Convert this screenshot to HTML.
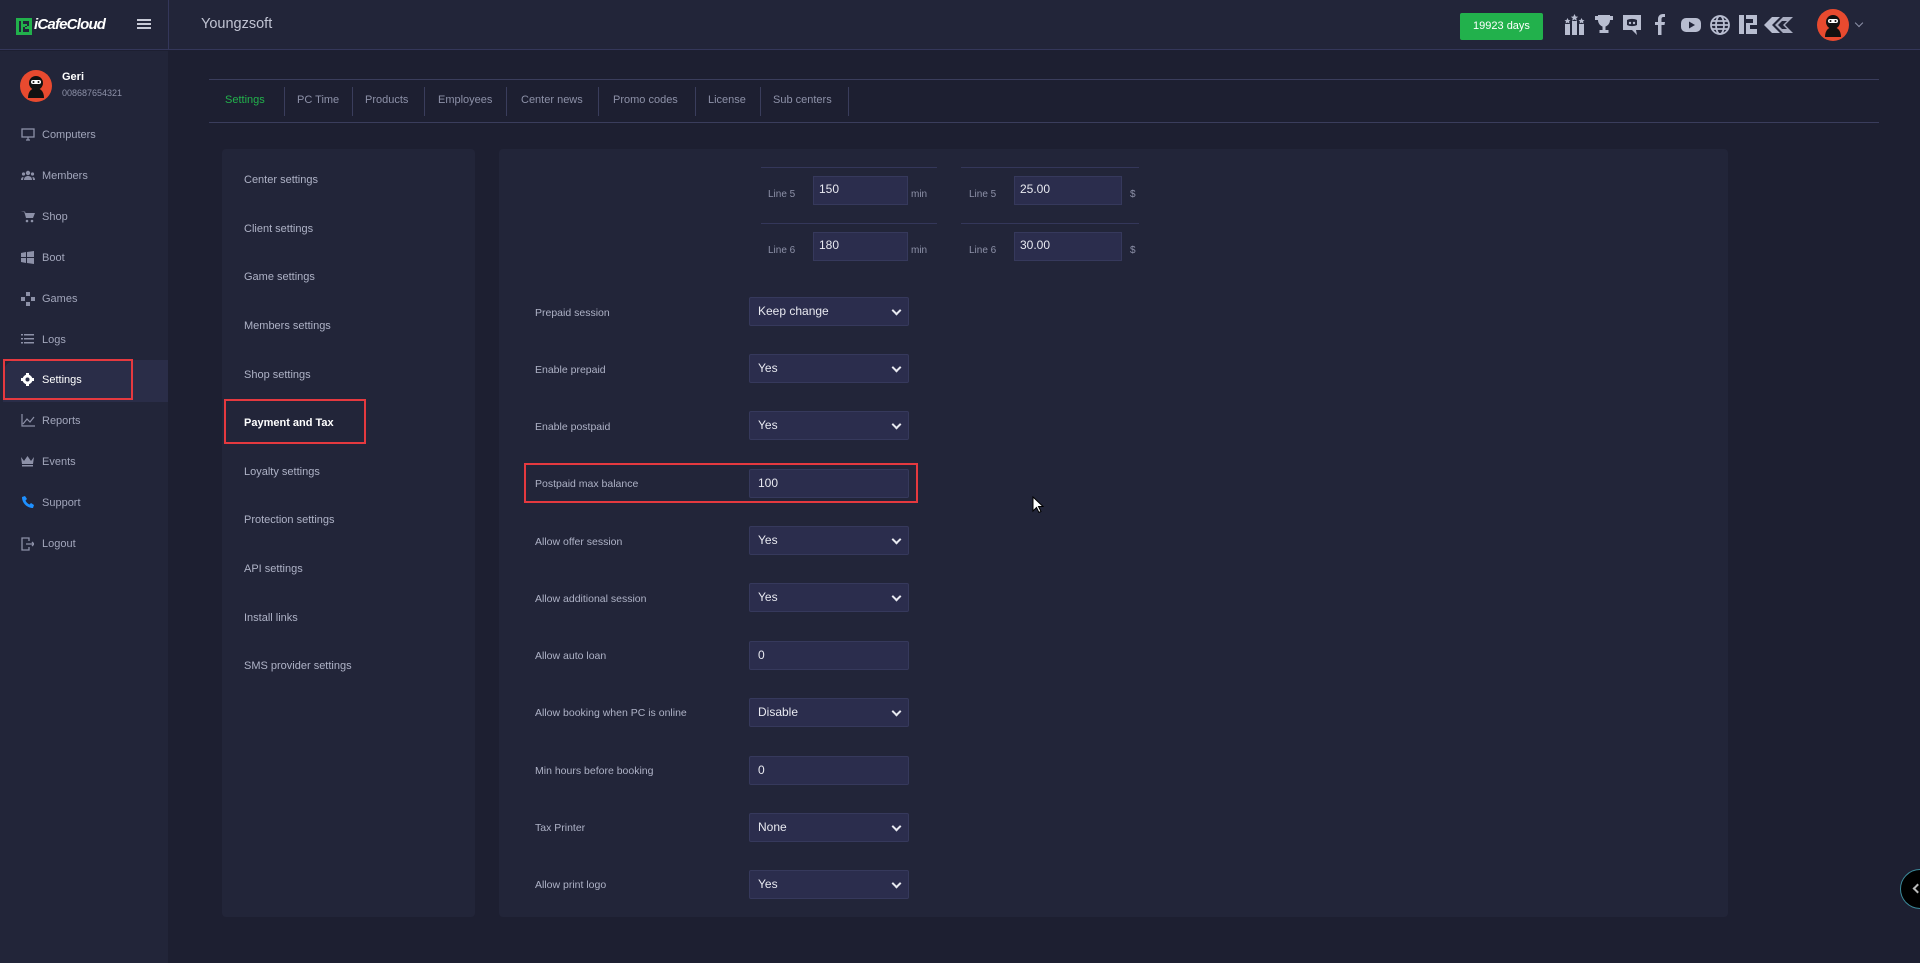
<!DOCTYPE html>
<html><head><meta charset="utf-8"><style>
*{margin:0;padding:0;box-sizing:border-box}
body{width:1920px;height:963px;background:#1d1f31;font-family:"Liberation Sans",sans-serif;color:#9fa3b8;position:relative;overflow:hidden;font-size:11px}
.a{position:absolute}
#hdr{left:0;top:0;width:1920px;height:50px;background:#222539;border-bottom:1px solid #34375a}
#side{left:0;top:51px;width:168px;height:912px;background:#222539}
.mi{position:absolute;left:21px;font-size:11px;color:#a2a6bb;height:14px;line-height:14px}
.mi span{position:absolute;left:21px;white-space:nowrap}
.mi svg{position:absolute;left:0;top:0}
.tab{position:absolute;top:94px;font-size:11px;color:#8d91a8}
.dv{position:absolute;top:87px;width:1px;height:29px;background:#3a3d5c}
.panel{background:#222539;border-radius:4px}
.li{position:absolute;left:244px;font-size:11px;color:#aeb2c6}
.lb{position:absolute;left:535px;font-size:10.5px;color:#aeb2c6}
.in{position:absolute;left:749px;width:160px;height:29px;background:#2b2d4d;border:1px solid #36395c;border-radius:2px;color:#e8e9f0;font-size:12px;line-height:27px;padding-left:8px}
.in.s:after{content:"";position:absolute;right:8px;top:9px;width:5px;height:5px;border-right:2px solid #e8e9f0;border-bottom:2px solid #e8e9f0;transform:rotate(45deg)}
.sm{position:absolute;height:29px;background:#2b2d4d;border:1px solid #36395c;color:#e8e9f0;font-size:12px;line-height:24px;padding-left:5px}
.red{position:absolute;border:2px solid #e5393f}
</style></head><body>
<div id="hdr" class="a"></div>
<div class="a" style="left:168px;top:0;width:1px;height:50px;background:#34375a"></div>
<svg class="a" style="left:16px;top:18px" width="16" height="17" viewBox="0 0 16 17"><rect x="0" y="0" width="16" height="17" fill="#22b14c"/><rect x="3" y="3" width="2" height="11" fill="#222539"/><path d="M7 3h6v5h-4v3h4v3h-6v-5h4v-3h-4z" fill="#222539"/></svg>
<div class="a" style="left:34px;top:16px;font-size:15px;font-style:italic;color:#fff;font-weight:bold;letter-spacing:-0.8px">iCafeCloud</div>
<div class="a" style="left:137px;top:19px;width:14px;height:2px;background:#c8cad6;box-shadow:0 4px 0 #c8cad6,0 8px 0 #c8cad6"></div>
<div class="a" style="left:201px;top:16px;font-size:14.5px;color:#c0c3d2">Youngzsoft</div>
<div class="a" style="left:1460px;top:13px;width:83px;height:27px;background:#22b14c;border-radius:2px;color:#fff;font-size:11px;text-align:center;line-height:27px">19923 days</div>
<svg class="a" style="left:1560px;top:12px" width="250" height="26" viewBox="0 0 250 26" fill="#b8bdd0">
<g transform="translate(5,2)"><rect x="0" y="10" width="5" height="11"/><rect x="7" y="7" width="5" height="14"/><rect x="14" y="10" width="5" height="11"/><path d="M9.5 0l1.2 2.5 2.5.2-2 1.6.7 2.5-2.4-1.4-2.4 1.4.7-2.5-2-1.6 2.5-.2z"/><path d="M2.5 4l1 2 2 .2-1.5 1.3.5 2-2-1-2 1 .5-2L-.5 6.2l2-.2zM16.5 4l1 2 2 .2-1.5 1.3.5 2-2-1-2 1 .5-2-1.5-1.3 2-.2z"/></g>
<g transform="translate(35,2)"><path d="M3 1h12v5c0 4-3 6-4.5 6.5V16h3v3h-9v-3h3v-3.5C6 12 3 10 3 6zM0 2h3v4H0zM15 2h3v4h-3z"/></g>
<g transform="translate(63,2)"><path d="M0 1h18v15h-5l1 5-5-5H0z"/><path d="M4 6c3-1.5 7-1.5 10 0v5c-3 1.5-7 1.5-10 0z" fill="#222539"/><circle cx="7" cy="9" r="1.2"/><circle cx="11" cy="9" r="1.2"/></g>
<g transform="translate(95,2)"><path d="M3 21v-10H0V8h3V5c0-3 2-5 5-5h2v3H8.5C7 3 6.5 4 6.5 5v3H10l-.5 3h-3v10z"/></g>
<g transform="translate(121,5)"><rect x="0" y="1" width="20" height="14" rx="5"/><path d="M8 4.5l6 3.5-6 3.5z" fill="#222539"/></g>
<g transform="translate(150,2)" fill="none" stroke="#b8bdd0" stroke-width="1.8"><circle cx="10" cy="11" r="9"/><ellipse cx="10" cy="11" rx="4" ry="9"/><path d="M1 11h18M2 7h16M2 15h16"/></g>
<g transform="translate(179,3)"><path d="M0 0h5v19H0zM7 0h11v10h-7v4h7v5H7v-11h7V4H7z"/></g>
<g transform="translate(204,4)"><path d="M0 9l8-8h8l-8 8 8 8H8z"/><path d="M11 9l8-8h10l-8 8 8 8H19z" opacity="0.9"/><path d="M14 9l4-4h5l-4 4 4 4h-5z" fill="#222539"/></g>
</svg>
<svg class="a" style="left:1817px;top:9px" width="32" height="32" viewBox="0 0 32 32"><circle cx="16" cy="16" r="16" fill="#e84a2f"/><path d="M8 28c0-7 4-10 8-10s8 3 8 10z" fill="#111"/><circle cx="16" cy="13" r="7" fill="#111"/><rect x="11" y="10" width="10" height="4" rx="2" fill="#fff"/><circle cx="13.5" cy="12" r="1" fill="#111"/><circle cx="18.5" cy="12" r="1" fill="#111"/></svg>
<div class="a" style="left:1856px;top:20px;width:6px;height:6px;border-right:1.5px solid #8d91a8;border-bottom:1.5px solid #8d91a8;transform:rotate(45deg)"></div>

<div id="side" class="a"></div>
<svg class="a" style="left:20px;top:70px" width="32" height="32" viewBox="0 0 32 32"><circle cx="16" cy="16" r="16" fill="#e84a2f"/><path d="M8 28c0-7 4-10 8-10s8 3 8 10z" fill="#111"/><circle cx="16" cy="13" r="7" fill="#111"/><rect x="11" y="10" width="10" height="4" rx="2" fill="#fff"/><circle cx="13.5" cy="12" r="1" fill="#111"/><circle cx="18.5" cy="12" r="1" fill="#111"/></svg>
<div class="a" style="left:62px;top:71px;font-size:11px;font-weight:bold;color:#fff">Geri</div>
<div class="a" style="left:62px;top:88px;font-size:9px;color:#8d91a8">008687654321</div>
<div class="a" style="left:3px;top:360px;width:165px;height:42px;background:#2a2d48;border-radius:14px 0 0 0"></div>
<div class="red" style="left:3px;top:359px;width:130px;height:41px"></div>
<div class="mi" style="top:128px"><svg width="14" height="13" viewBox="0 0 14 13" fill="none" stroke="#8d91a8" stroke-width="1.3"><rect x="1" y="1" width="12" height="8"/><path d="M5 12h4M7 9v3"/></svg><span>Computers</span></div>
<div class="mi" style="top:169px"><svg width="14" height="12" viewBox="0 0 14 12" fill="#8d91a8"><circle cx="7" cy="4" r="2.2"/><circle cx="2.5" cy="5" r="1.6"/><circle cx="11.5" cy="5" r="1.6"/><path d="M3 11c0-3 2-4 4-4s4 1 4 4zM0 11c0-2 1-3 2.5-3L2 11zM14 11c0-2-1-3-2.5-3l.5 3z"/></svg><span>Members</span></div>
<div class="mi" style="top:210px"><svg width="14" height="13" viewBox="0 0 14 13" fill="#8d91a8"><path d="M0 1h3l2 7h7l2-5H4.5L4 1.5z"/><circle cx="6" cy="11" r="1.3"/><circle cx="11" cy="11" r="1.3"/></svg><span>Shop</span></div>
<div class="mi" style="top:251px"><svg width="13" height="13" viewBox="0 0 13 13" fill="#8d91a8"><path d="M0 2l5-1v5H0zM6 1l7-1v6H6zM0 7h5v5l-5-1zM6 7h7v6l-7-1z"/></svg><span>Boot</span></div>
<div class="mi" style="top:292px"><svg width="14" height="14" viewBox="0 0 14 14" fill="#8d91a8"><rect x="5" y="0" width="4" height="4"/><rect x="0" y="5" width="4" height="4"/><rect x="10" y="5" width="4" height="4"/><rect x="5" y="10" width="4" height="4"/></svg><span>Games</span></div>
<div class="mi" style="top:333px"><svg width="13" height="12" viewBox="0 0 13 12" fill="#8d91a8"><rect x="0" y="1" width="2" height="1.5"/><rect x="3" y="1" width="10" height="1.5"/><rect x="0" y="5" width="2" height="1.5"/><rect x="3" y="5" width="10" height="1.5"/><rect x="0" y="9" width="2" height="1.5"/><rect x="3" y="9" width="10" height="1.5"/></svg><span>Logs</span></div>
<div class="mi" style="top:373px;color:#fff"><svg width="13" height="13" viewBox="0 0 13 13" fill="#fff"><circle cx="6.5" cy="6.5" r="5"/><rect x="5" y="0" width="3" height="13"/><rect x="0" y="5" width="13" height="3"/><circle cx="6.5" cy="6.5" r="2" fill="#2a2d48"/></svg><span>Settings</span></div>
<div class="mi" style="top:414px"><svg width="14" height="13" viewBox="0 0 14 13" fill="none" stroke="#8d91a8" stroke-width="1.2"><path d="M1 0v12h13M2 10l4-5 3 3 4-5"/></svg><span>Reports</span></div>
<div class="mi" style="top:455px"><svg width="13" height="12" viewBox="0 0 13 12" fill="#8d91a8"><path d="M0 2l3 4 3.5-5 3.5 5 3-4-1 7H1zM1 10h11v1.5H1z"/></svg><span>Events</span></div>
<div class="mi" style="top:496px"><svg width="13" height="13" viewBox="0 0 13 13" fill="#1e90ff"><path d="M1 1l3-1 2 3-1.5 1.5c1 2 2 3 4 4L10 7l3 2-1 3C6 12 1 7 1 1z"/></svg><span>Support</span></div>
<div class="mi" style="top:537px"><svg width="13" height="14" viewBox="0 0 13 14" fill="none" stroke="#8d91a8" stroke-width="1.3"><path d="M8 4V1H1v12h7v-3M5 7h8M11 5l2 2-2 2"/></svg><span>Logout</span></div>

<div class="a" style="left:209px;top:79px;width:1670px;height:1px;background:#3a3d5c"></div>
<div class="a" style="left:209px;top:122px;width:1670px;height:1px;background:#3a3d5c"></div>
<div class="tab" style="left:225px;color:#22b14c">Settings</div>
<div class="dv" style="left:284px"></div>
<div class="tab" style="left:297px">PC Time</div>
<div class="dv" style="left:352px"></div>
<div class="tab" style="left:365px">Products</div>
<div class="dv" style="left:424px"></div>
<div class="tab" style="left:438px">Employees</div>
<div class="dv" style="left:506px"></div>
<div class="tab" style="left:521px">Center news</div>
<div class="dv" style="left:598px"></div>
<div class="tab" style="left:613px">Promo codes</div>
<div class="dv" style="left:695px"></div>
<div class="tab" style="left:708px">License</div>
<div class="dv" style="left:760px"></div>
<div class="tab" style="left:773px">Sub centers</div>
<div class="dv" style="left:848px"></div>

<div class="a panel" style="left:222px;top:149px;width:253px;height:768px"></div>
<div class="li" style="top:174px">Center settings</div>
<div class="li" style="top:223px">Client settings</div>
<div class="li" style="top:271px">Game settings</div>
<div class="li" style="top:320px">Members settings</div>
<div class="li" style="top:369px">Shop settings</div>
<div class="li" style="top:417px;color:#fff;font-weight:bold">Payment and Tax</div>
<div class="red" style="left:224px;top:399px;width:142px;height:45px"></div>
<div class="li" style="top:466px">Loyalty settings</div>
<div class="li" style="top:514px">Protection settings</div>
<div class="li" style="top:563px">API settings</div>
<div class="li" style="top:612px">Install links</div>
<div class="li" style="top:660px">SMS provider settings</div>

<div class="a panel" style="left:499px;top:149px;width:1229px;height:768px"></div>
<div class="a" style="left:761px;top:167px;width:176px;height:1px;background:#34375a"></div>
<div class="a" style="left:961px;top:167px;width:178px;height:1px;background:#34375a"></div>
<div class="a" style="left:761px;top:223px;width:176px;height:1px;background:#34375a"></div>
<div class="a" style="left:961px;top:223px;width:178px;height:1px;background:#34375a"></div>
<div class="a" style="left:768px;top:189px;font-size:10px;color:#8d91a8">Line 5</div>
<div class="sm" style="left:813px;top:176px;width:95px">150</div>
<div class="a" style="left:911px;top:189px;font-size:10px;color:#8d91a8">min</div>
<div class="a" style="left:969px;top:189px;font-size:10px;color:#8d91a8">Line 5</div>
<div class="sm" style="left:1014px;top:176px;width:108px">25.00</div>
<div class="a" style="left:1130px;top:189px;font-size:10px;color:#8d91a8">$</div>
<div class="a" style="left:768px;top:245px;font-size:10px;color:#8d91a8">Line 6</div>
<div class="sm" style="left:813px;top:232px;width:95px">180</div>
<div class="a" style="left:911px;top:245px;font-size:10px;color:#8d91a8">min</div>
<div class="a" style="left:969px;top:245px;font-size:10px;color:#8d91a8">Line 6</div>
<div class="sm" style="left:1014px;top:232px;width:108px">30.00</div>
<div class="a" style="left:1130px;top:245px;font-size:10px;color:#8d91a8">$</div>

<div class="lb" style="top:307px">Prepaid session</div><div class="in s" style="top:297px">Keep change</div>
<div class="lb" style="top:364px">Enable prepaid</div><div class="in s" style="top:354px">Yes</div>
<div class="lb" style="top:421px">Enable postpaid</div><div class="in s" style="top:411px">Yes</div>
<div class="lb" style="top:478px">Postpaid max balance</div><div class="in" style="top:469px">100</div>
<div class="red" style="left:524px;top:463px;width:394px;height:40px"></div>
<div class="lb" style="top:536px">Allow offer session</div><div class="in s" style="top:526px">Yes</div>
<div class="lb" style="top:593px">Allow additional session</div><div class="in s" style="top:583px">Yes</div>
<div class="lb" style="top:650px">Allow auto loan</div><div class="in" style="top:641px">0</div>
<div class="lb" style="top:707px">Allow booking when PC is online</div><div class="in s" style="top:698px">Disable</div>
<div class="lb" style="top:765px">Min hours before booking</div><div class="in" style="top:756px">0</div>
<div class="lb" style="top:822px">Tax Printer</div><div class="in s" style="top:813px">None</div>
<div class="lb" style="top:879px">Allow print logo</div><div class="in s" style="top:870px">Yes</div>

<svg class="a" style="left:1032px;top:496px" width="12" height="18" viewBox="0 0 12 18"><path d="M1 1v14l3.5-3.5 2.5 5 2-1-2.5-5H11z" fill="#fff" stroke="#000"/></svg>
<div class="a" style="left:1900px;top:869px;width:40px;height:40px;border-radius:50%;background:#000;border:1px solid #3b8a9a"></div>
<div class="a" style="left:1914px;top:885px;width:7px;height:7px;border-left:2px solid #bbb;border-bottom:2px solid #bbb;transform:rotate(45deg)"></div>
</body></html>
